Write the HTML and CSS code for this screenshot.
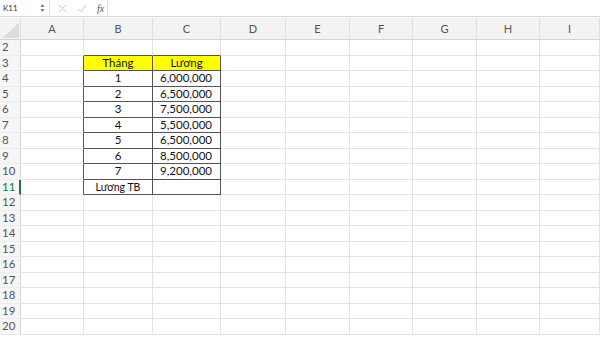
FILE: index.html
```html
<!DOCTYPE html>
<html lang="vi">
<head>
  <meta charset="UTF-8">
  <title>Lương</title>
  <link rel="stylesheet" href="styles.css">
</head>
<body>
  <div class="formula-bar">
    <div class="name-box">
      <span>K11</span>
      <span class="spin">
        <svg width="5" height="10" viewBox="0 0 5 10"><path d="M0.5 4 L2.5 1 L4.5 4 Z M0.5 6 L2.5 9 L4.5 6 Z" fill="#777"/></svg>
      </span>
    </div>
    <div class="bar-icons">
      <svg width="9" height="9" viewBox="0 0 9 9"><path d="M1 1 L8 8 M8 1 L1 8" stroke="#c8c8c8" stroke-width="1"/></svg>
      <svg width="10" height="9" viewBox="0 0 10 9"><path d="M1 5 L4 8 L9 1" stroke="#c8c8c8" stroke-width="1" fill="none"/></svg>
      <span class="fx">fx</span>
    </div>
    <div class="formula"></div>
  </div>

  <div class="sheet">
    <div class="row head">
      <div class="corner"></div>
      <div>A</div><div>B</div><div>C</div><div>D</div><div>E</div><div>F</div><div>G</div><div>H</div><div>I</div>
    </div>
    <div class="row"><div class="rh">2</div><div></div><div class="kb"></div><div class="kb"></div><div></div><div></div><div></div><div></div><div></div><div></div></div>
    <div class="row"><div class="rh">3</div><div class="kr"></div><div class="k hd">Tháng</div><div class="k hd">Lương</div><div></div><div></div><div></div><div></div><div></div><div></div></div>
    <div class="row"><div class="rh">4</div><div class="kr"></div><div class="k">1</div><div class="k num">6,000,000</div><div></div><div></div><div></div><div></div><div></div><div></div></div>
    <div class="row"><div class="rh">5</div><div class="kr"></div><div class="k">2</div><div class="k num">6,500,000</div><div></div><div></div><div></div><div></div><div></div><div></div></div>
    <div class="row"><div class="rh">6</div><div class="kr"></div><div class="k">3</div><div class="k num">7,500,000</div><div></div><div></div><div></div><div></div><div></div><div></div></div>
    <div class="row"><div class="rh">7</div><div class="kr"></div><div class="k">4</div><div class="k num">5,500,000</div><div></div><div></div><div></div><div></div><div></div><div></div></div>
    <div class="row"><div class="rh">8</div><div class="kr"></div><div class="k">5</div><div class="k num">6,500,000</div><div></div><div></div><div></div><div></div><div></div><div></div></div>
    <div class="row"><div class="rh">9</div><div class="kr"></div><div class="k">6</div><div class="k num">8,500,000</div><div></div><div></div><div></div><div></div><div></div><div></div></div>
    <div class="row"><div class="rh">10</div><div class="kr"></div><div class="k">7</div><div class="k num">9,200,000</div><div></div><div></div><div></div><div></div><div></div><div></div></div>
    <div class="row"><div class="rh sel">11</div><div class="kr"></div><div class="k small">Lương TB</div><div class="k"></div><div></div><div></div><div></div><div></div><div></div><div></div></div>
    <div class="row"><div class="rh">12</div><div></div><div></div><div></div><div></div><div></div><div></div><div></div><div></div><div></div></div>
    <div class="row"><div class="rh">13</div><div></div><div></div><div></div><div></div><div></div><div></div><div></div><div></div><div></div></div>
    <div class="row"><div class="rh">14</div><div></div><div></div><div></div><div></div><div></div><div></div><div></div><div></div><div></div></div>
    <div class="row"><div class="rh">15</div><div></div><div></div><div></div><div></div><div></div><div></div><div></div><div></div><div></div></div>
    <div class="row"><div class="rh">16</div><div></div><div></div><div></div><div></div><div></div><div></div><div></div><div></div><div></div></div>
    <div class="row"><div class="rh">17</div><div></div><div></div><div></div><div></div><div></div><div></div><div></div><div></div><div></div></div>
    <div class="row"><div class="rh">18</div><div></div><div></div><div></div><div></div><div></div><div></div><div></div><div></div><div></div></div>
    <div class="row"><div class="rh">19</div><div></div><div></div><div></div><div></div><div></div><div></div><div></div><div></div><div></div></div>
    <div class="row"><div class="rh">20</div><div></div><div></div><div></div><div></div><div></div><div></div><div></div><div></div><div></div></div>
  </div>
</body>
</html>
```

FILE: styles.css
```css
body {
  margin: 0;
  background-color: #fff;
  font-family: Lato, "Open Sans", sans-serif;
  color: #222;
  overflow: hidden;
}
.formula-bar {
  display: flex;
  height: 16px;
  border-bottom: 1px solid #d6d6d6;
  background-color: #fff;
}
.name-box {
  width: 50px;
  display: flex;
  align-items: center;
  justify-content: space-between;
  padding: 0 4px 0 3px;
  box-sizing: border-box;
  border-right: 1px solid #e0e0e0;
  font-size: 8px;
  color: #333;
}
.spin {
  display: flex;
}
.bar-icons {
  width: 58px;
  display: flex;
  align-items: center;
  gap: 10px;
  padding-left: 8px;
  box-sizing: border-box;
  border-right: 1px solid #e0e0e0;
}
.fx {
  font-family: "Liberation Serif", serif;
  font-style: italic;
  font-size: 10px;
  color: #555;
}
.formula {
  flex: 1;
}
.sheet {
  padding-top: 1px;
}
.row {
  display: grid;
  grid-template-columns: 21px 63px 69px 68px 65px 64px 63px 64px 63px 1fr;
  height: 15.5px;
}
.row > div {
  box-sizing: border-box;
  border-right: 1px solid #e3e3e3;
  border-bottom: 1px solid #e3e3e3;
  font-size: 11.5px;
  line-height: 14px;
  text-align: center;
  white-space: nowrap;
  overflow: hidden;
}
.row.head {
  height: 22px;
  background-color: #f3f3f3;
}
.row.head > div {
  line-height: 21px;
  color: #555;
  font-size: 11px;
  border-bottom-color: #d4d4d4;
  border-right-color: #dedede;
}
.corner {
  background: linear-gradient(135deg, #f3f3f3 50%, #dcdcdc 50%);
  background-size: 16px 16px;
  background-repeat: no-repeat;
  background-position: right 1px bottom 1px;
}
.row > .rh {
  background-color: #f6f6f6;
  color: #555;
  text-align: left;
  padding-left: 2px;
  font-size: 11.5px;
  border-bottom-color: #ececec;
  border-right-color: #d4d4d4;
}
.row > .rh.sel {
  color: #217346;
  border-right: 2px solid #217346;
}
.row > .k {
  border-right-color: #555;
  border-bottom-color: #555;
  color: #111;
}
.row > .kr {
  border-right-color: #555;
}
.row > .kb {
  border-bottom-color: #555;
}
.row > .hd {
  background-color: #ffff00;
}
.row > .num {
  text-align: right;
  padding-right: 8px;
}
.row > .small {
  font-size: 10.5px;
}
```
